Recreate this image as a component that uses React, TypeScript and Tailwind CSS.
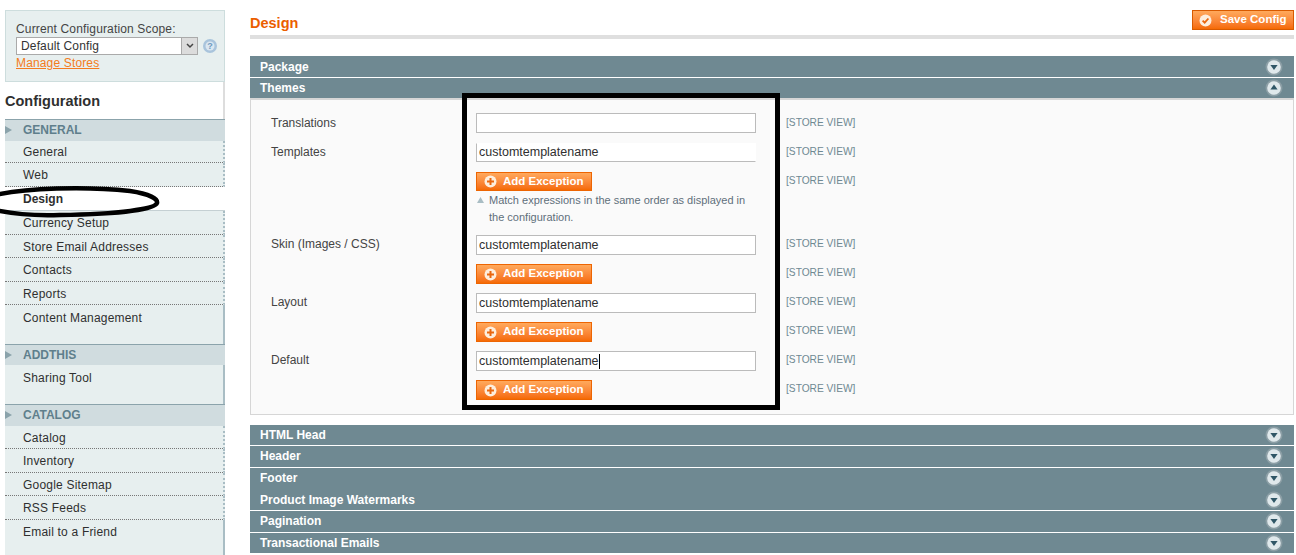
import React from 'react';

const font = { fontFamily: '"Liberation Sans", Arial, sans-serif' };

type NavItem = { label: string; h: string; last?: boolean; active?: boolean };

const nav: { title: string; head: string; items: NavItem[] }[] = [
  {
    title: 'GENERAL',
    head: 'h-[22px] pb-[1px]',
    items: [
      { label: 'General', h: 'h-[22px]' },
      { label: 'Web', h: 'h-[24px]' },
      { label: 'Design', h: 'h-[24px]', active: true },
      { label: 'Currency Setup', h: 'h-[24px]' },
      { label: 'Store Email Addresses', h: 'h-[23px]' },
      { label: 'Contacts', h: 'h-[24px]' },
      { label: 'Reports', h: 'h-[23px]' },
      { label: 'Content Management', h: 'h-[24px]', last: true },
    ],
  },
  { title: 'ADDTHIS', head: 'h-[21px]', items: [{ label: 'Sharing Tool', h: 'h-[24px]', last: true }] },
  {
    title: 'CATALOG',
    head: 'h-[22px] pb-[1px]',
    items: [
      { label: 'Catalog', h: 'h-[23px]' },
      { label: 'Inventory', h: 'h-[24px]' },
      { label: 'Google Sitemap', h: 'h-[23px]' },
      { label: 'RSS Feeds', h: 'h-[24px]' },
      { label: 'Email to a Friend', h: 'h-[23px]', last: true },
    ],
  },
];

function PlusIcon() {
  return (
    <svg width="13" height="13" viewBox="0 0 13 13" className="shrink-0">
      <circle cx="6.5" cy="6.5" r="6" fill="#fdeedd" />
      <path d="M6.5 3v7M3 6.5h7" stroke="#e9670f" strokeWidth="2" />
    </svg>
  );
}

function CheckIcon() {
  return (
    <svg width="13" height="13" viewBox="0 0 13 13" className="shrink-0">
      <circle cx="6.5" cy="6.5" r="6" fill="#fdeedd" />
      <path d="M3.6 6.6l2.1 2.1 3.7-4.2" fill="none" stroke="#e9670f" strokeWidth="1.8" />
    </svg>
  );
}

function Toggle({ open }: { open?: boolean }) {
  return (
    <svg width="18" height="18" viewBox="0 0 18 18" className="shrink-0">
      <circle cx="9" cy="9" r="8.5" fill="#8b9ea5" />
      <circle cx="9" cy="9" r="6.8" fill="#dfe8eb" />
      <path d={open ? 'M9 5.5l3.6 5H5.4z' : 'M5.4 7h7.2L9 12z'} fill="#2f5666" />
    </svg>
  );
}

function Bar({ title, className = '', open }: { title: string; className?: string; open?: boolean }) {
  return (
    <div className={`flex items-center justify-between bg-[#6f8992] pl-[10px] pr-[11px] ${className}`}>
      <span className="text-[12px] font-bold text-white">{title}</span>
      <Toggle open={open} />
    </div>
  );
}

function AddButton() {
  return (
    <button className="flex h-full w-[116px] items-center gap-[6px] border border-[#ed6502] bg-gradient-to-b from-[#ffa95c] to-[#f56a00] pl-[7px] text-[11.5px] font-bold text-white">
      <PlusIcon />
      Add Exception
    </button>
  );
}

function Scope({ lift = 'mb-[2px]' }: { lift?: string }) {
  return <span className={`ml-[30px] text-[10.2px] text-[#6f8992] ${lift}`}>[STORE VIEW]</span>;
}

function FieldRow({
  label,
  value,
  caret,
  className = '',
  box = 'border-[#bbb]',
  lift = 'mb-[2px]',
}: {
  label: string;
  value: string;
  caret?: boolean;
  className?: string;
  box?: string;
  lift?: string;
}) {
  return (
    <div className={`flex items-center ${className}`}>
      <span className={`w-[225px] pl-[20px] text-[12px] text-[#444] ${lift}`}>{label}</span>
      <div className={`flex h-full w-[280px] items-center border bg-white pl-[2px] text-[12.5px] text-[#2f2f2f] ${box}`}>
        {value}
        {caret && <span className="h-[15px] w-px bg-black" />}
      </div>
      <Scope lift={lift} />
    </div>
  );
}

function ButtonRow({ className = '', lift }: { className?: string; lift?: string }) {
  return (
    <div className={`flex items-center pl-[225px] ${className}`}>
      <div className="h-full w-[280px]">
        <AddButton />
      </div>
      <Scope lift={lift} />
    </div>
  );
}

export default function App() {
  return (
    <div style={font} className="relative flex h-[555px] w-[1296px] overflow-hidden bg-white">
      <aside className="ml-[5px] mt-[10px] w-[220px] shrink-0">
        <div className="h-[72px] border border-[#cddddd] bg-[#e7efef] pl-[10px] pt-[11px] text-[12px] tracking-[0.15px] text-[#444]">
          <div className="leading-[14px]">Current Configuration Scope:</div>
          <div className="mt-[1px] flex items-center">
            <div className="flex h-[18px] w-[182px] items-center justify-between border border-[#aaa] bg-white pl-[4px] text-[12px] text-[#333]">
              Default Config
              <span className="flex h-[16px] w-[16px] items-center justify-center border-l border-[#aaa] bg-[#dcdcdc]">
                <svg width="8" height="6" viewBox="0 0 8 6">
                  <path d="M1 1l3 3 3-3" fill="none" stroke="#444" strokeWidth="1.5" />
                </svg>
              </span>
            </div>
            <svg width="16" height="16" viewBox="0 0 16 16" className="ml-[4px]">
              <circle cx="8" cy="8" r="7" fill="#a9c4dc" />
              <circle cx="8" cy="8" r="4.5" fill="#dbe7f1" />
              <text x="8" y="11" textAnchor="middle" fontSize="9" fontWeight="700" fill="#6f9ac0">?</text>
            </svg>
          </div>
          <div className="text-[12px] leading-[16px] text-[#f47b20] underline">Manage Stores</div>
        </div>
        <div className="flex h-[37px] items-center border-r-[2px] border-[#ddd] pt-[2px] text-[14.5px] font-bold text-[#2f2f2f]">Configuration</div>
        {nav.map((section) => (
          <div key={section.title}>
            <div className={`flex items-center border-t border-[#8ba3ab] bg-[#d0dcdf] text-[12px] font-bold text-[#5f7f8c] ${section.head}`}>
              <svg width="7" height="8" viewBox="0 0 7 8" className="mr-[11px]">
                <path d="M0 0l7 4-7 4z" fill="#8ba3ab" />
              </svg>
              {section.title}
            </div>
            {section.items.map((item) =>
              item.active ? (
                <div key={item.label} className={`flex items-center border-b border-[#c5d0d3] bg-white pl-[18px] text-[12px] font-bold text-[#2f2f2f] ${item.h}`}>
                  {item.label}
                </div>
              ) : (
                <div
                  key={item.label}
                  className={`flex items-center border-r-[2px] border-r-[#a9bdc4] bg-[#e7efef] pl-[18px] pt-[1px] text-[12px] tracking-[0.2px] text-[#2f2f2f] ${item.h} ${item.last ? '' : 'border-b border-dotted border-b-[#777]'}`}
                >
                  {item.label}
                </div>
              ),
            )}
            <div className="h-[15px] border-r-[2px] border-[#a9bdc4] bg-[#e7efef]" />
          </div>
        ))}
      </aside>

      <main className="ml-[25px] w-[1044px] shrink-0 pt-[10px]">
        <div className="flex h-[29px] items-start justify-between border-b-[4px] border-[#dfdfdf]">
          <h1 className="pt-[3px] text-[14.5px] font-bold text-[#eb5e00]">Design</h1>
          <button className="flex h-[20px] w-[102px] items-center gap-[8px] border border-[#d85a00] bg-gradient-to-b from-[#ffa95c] to-[#f56a00] pl-[6px] text-[11.5px] font-bold text-white">
            <CheckIcon />
            Save Config
          </button>
        </div>
        <div className="mt-[17px] flex flex-col gap-px">
          <Bar title="Package" className="h-[21px]" />
          <Bar title="Themes" open className="h-[20px]" />
        </div>
        <section className="h-[317px] border border-t-2 border-[#d6d6d6] bg-[#fafafa] pt-[13px]">
          <FieldRow label="Translations" value="" className="h-[20px]" lift="mb-[1px]" />
          <FieldRow
            label="Templates"
            value="customtemplatename"
            className="mt-[10px] h-[19px]"
            box="border-white border-b-[#bbb] border-l-[#bbb]"
            lift="mb-[1px]"
          />
          <ButtonRow className="mt-[10px] h-[19px]" lift="mb-[1px]" />
          <div className="ml-[225px] mt-[1px] flex h-[32px] w-[280px] text-[11px] leading-[17px] text-[#5f6f7a]">
            <svg width="7" height="6" viewBox="0 0 7 6" className="ml-[1px] mr-[5px] mt-[5px] shrink-0">
              <path d="M3.5 0l3.5 6H0z" fill="#a9bdc4" />
            </svg>
            <span>Match expressions in the same order as displayed in the configuration.</span>
          </div>
          <FieldRow label="Skin (Images / CSS)" value="customtemplatename" className="mt-[11px] h-[20px]" />
          <ButtonRow className="mt-[9px] h-[20px]" />
          <FieldRow label="Layout" value="customtemplatename" className="mt-[9px] h-[20px]" />
          <ButtonRow className="mt-[9px] h-[20px]" />
          <FieldRow label="Default" value="customtemplatename" caret className="mt-[9px] h-[20px]" />
          <ButtonRow className="mt-[9px] h-[20px]" />
        </section>
        <div className="mt-[10px] flex flex-col">
          <Bar title="HTML Head" className="h-[20px]" />
          <Bar title="Header" className="mt-px h-[21px] pb-[1px]" />
          <Bar title="Footer" className="mt-px h-[21px] pb-[1px]" />
          <Bar title="Product Image Watermarks" className="h-[21px]" />
          <Bar title="Pagination" className="mt-px h-[21px] pb-[1px]" />
          <Bar title="Transactional Emails" className="mt-px h-[20px]" />
        </div>
      </main>

      {/* hand-drawn annotations on top of the screenshot */}
      <div className="pointer-events-none absolute left-[462px] top-[93px] h-[317px] w-[318px] border-[5px] border-black" />
      <svg width="170" height="40" viewBox="0 0 170 40" className="pointer-events-none absolute left-0 top-[182px]">
        <path
          d="M-5 13C25 6 85 4 130 9C150 12 158 17 157 21C155 27 120 32 60 33C30 34 8 31 -5 28"
          fill="none"
          stroke="#000"
          strokeWidth="4.5"
        />
      </svg>
    </div>
  );
}
